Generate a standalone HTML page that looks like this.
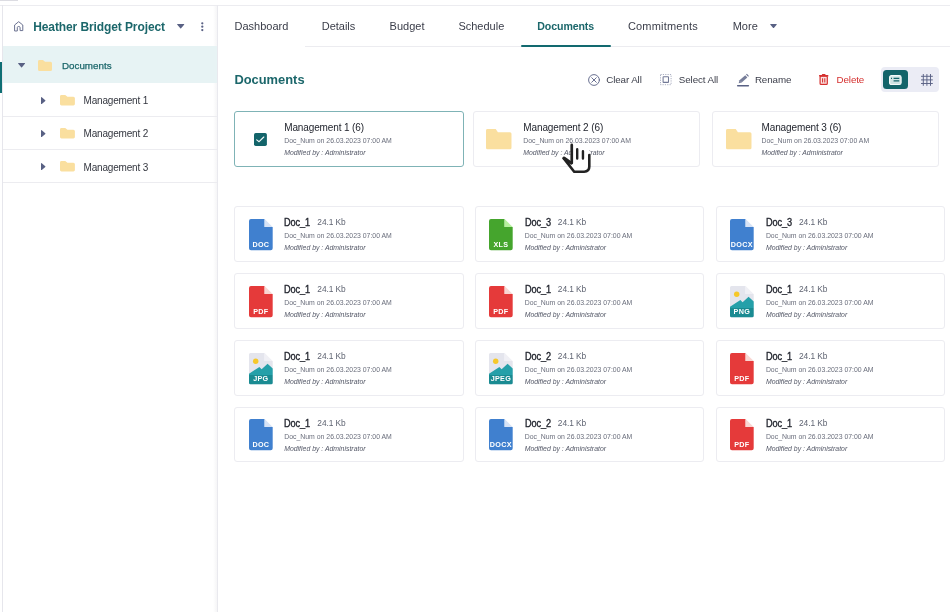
<!DOCTYPE html><html><head><meta charset="utf-8"><title>Documents</title><style>
*{margin:0;padding:0;box-sizing:border-box}
html,body{width:950px;height:612px;background:#fff;overflow:hidden}
body{position:relative;filter:blur(0.5px);font-family:"Liberation Sans",sans-serif;color:#2b2f3a}
.t{position:absolute;white-space:nowrap;line-height:1;font-size:11px}
.abs{position:absolute}
.card{position:absolute;background:#fff;border:1px solid #ececf1;border-radius:3px;height:55.5px}
.card.sel{border-color:#7fb3b6}
.c1{left:49px;top:10.7px;font-size:10px;letter-spacing:-0.12px;color:#23262f}
.c1 b{font-weight:normal;-webkit-text-stroke:0.35px #23262f;font-size:10.2px;display:inline-block;transform:scaleX(0.9);transform-origin:0 50%;margin-right:-3px}
.c1 .sz{position:relative;top:-0.7px;font-size:8.4px;letter-spacing:-0.1px;color:#5f6472;margin-left:7.3px;font-weight:normal}
.c2{left:49px;top:26.1px;font-size:6.9px;color:#6a6e7c}
.c3{left:49px;top:38.1px;font-size:6.9px;color:#555968;font-style:italic}
svg{position:absolute;overflow:visible}
</style></head><body>
<div class="abs" style="left:0;top:0;width:18px;height:1px;background:#dcdce2"></div>
<div class="abs" style="left:0;top:5px;width:950px;height:1px;background:#ececf0"></div>
<div class="abs" style="left:2px;top:5px;width:1px;height:607px;background:#e6e6ec"></div>
<div class="abs" style="left:217px;top:5px;width:1px;height:607px;background:#e9e9ee"></div>
<div class="abs" style="left:213px;top:6px;width:4px;height:606px;background:linear-gradient(90deg,rgba(30,30,60,0),rgba(30,30,60,0.045))"></div>
<svg style="left:13.8px;top:21.1px" width="9.4" height="10.2" viewBox="0 0 9.4 10.2" fill="none" stroke="#596184" stroke-width="1" stroke-linejoin="round" stroke-linecap="round" opacity="0.9"><path d="M0.6 9.6V4L4.7 0.7L8.8 4V9.6H6.1V6.6Q6.1 5.5 4.7 5.5Q3.3 5.5 3.3 6.6V9.6Z"/></svg>
<div class="t" id="proj" style="left:33.2px;top:20.8px;font-size:12px;letter-spacing:-0.1px;font-weight:bold;color:#1c676b">Heather Bridget Project</div>
<svg style="left:176.8px;top:23.9px" width="7.4" height="4.6" viewBox="0 0 7.4 4.6"><path d="M0.4 0H7Q7.6 0.3 7.1 0.8L4.1 4.3Q3.7 4.7 3.3 4.3L0.3 0.8Q-0.2 0.3 0.4 0Z" fill="#596184"/></svg>
<svg style="left:201px;top:21.6px" width="2.6" height="9.4" viewBox="0 0 2.6 9.4" fill="#596184"><circle cx="1.3" cy="1.3" r="1.15"/><circle cx="1.3" cy="4.7" r="1.15"/><circle cx="1.3" cy="8.1" r="1.15"/></svg>
<div class="abs" style="left:3px;top:46px;width:214px;height:37.2px;background:#e7f3f4"></div>
<div class="abs" style="left:0;top:62px;width:1.6px;height:31px;background:#0f6f74"></div>
<svg style="left:17.6px;top:63px" width="7.2" height="4.6" viewBox="0 0 7.4 4.6"><path d="M0.4 0H7Q7.6 0.3 7.1 0.8L4.1 4.3Q3.7 4.7 3.3 4.3L0.3 0.8Q-0.2 0.3 0.4 0Z" fill="#596184"/></svg>
<svg style="left:37.9px;top:59.9px" width="14" height="11.1" viewBox="0 0 14 11.1"><path d="M1.5 0H4.88L7.08 1.776H12.5Q14 1.776 14 3.276V9.6Q14 11.1 12.5 11.1H1.5Q0 11.1 0 9.6V1.5Q0 0 1.5 0Z" fill="#fadf9f"/></svg>
<div class="t" id="sdoc" style="left:62px;top:60.5px;font-size:9.8px;-webkit-text-stroke:0.25px #1c676b;color:#1c676b">Documents</div>
<div class="abs" style="left:3px;top:115.9px;width:214px;height:1px;background:#ececf0"></div>
<svg style="left:41.2px;top:96.7px" width="4.6" height="7.2" viewBox="0 0 4.6 7.2"><path d="M0 0.4V6.8Q0.3 7.4 0.8 6.9L4.3 3.95Q4.7 3.6 4.3 3.25L0.8 0.3Q0.3 -0.2 0 0.4Z" fill="#596184"/></svg>
<svg style="left:59.7px;top:94.8px" width="14.9" height="10.6" viewBox="0 0 14.9 10.6"><path d="M1.5 0H5.258L7.458 1.696H13.4Q14.9 1.696 14.9 3.1959999999999997V9.1Q14.9 10.6 13.4 10.6H1.5Q0 10.6 0 9.1V1.5Q0 0 1.5 0Z" fill="#fadf9f"/></svg>
<div class="t m" style="left:83.6px;top:96.0px;font-size:10px;letter-spacing:-0.19px;color:#33363f">Management 1</div>
<div class="abs" style="left:3px;top:149.3px;width:214px;height:1px;background:#ececf0"></div>
<svg style="left:41.2px;top:130.1px" width="4.6" height="7.2" viewBox="0 0 4.6 7.2"><path d="M0 0.4V6.8Q0.3 7.4 0.8 6.9L4.3 3.95Q4.7 3.6 4.3 3.25L0.8 0.3Q0.3 -0.2 0 0.4Z" fill="#596184"/></svg>
<svg style="left:59.7px;top:128.20000000000002px" width="14.9" height="10.6" viewBox="0 0 14.9 10.6"><path d="M1.5 0H5.258L7.458 1.696H13.4Q14.9 1.696 14.9 3.1959999999999997V9.1Q14.9 10.6 13.4 10.6H1.5Q0 10.6 0 9.1V1.5Q0 0 1.5 0Z" fill="#fadf9f"/></svg>
<div class="t m" style="left:83.6px;top:129.4px;font-size:10px;letter-spacing:-0.19px;color:#33363f">Management 2</div>
<div class="abs" style="left:3px;top:182.4px;width:214px;height:1px;background:#ececf0"></div>
<svg style="left:41.2px;top:163.2px" width="4.6" height="7.2" viewBox="0 0 4.6 7.2"><path d="M0 0.4V6.8Q0.3 7.4 0.8 6.9L4.3 3.95Q4.7 3.6 4.3 3.25L0.8 0.3Q0.3 -0.2 0 0.4Z" fill="#596184"/></svg>
<svg style="left:59.7px;top:161.3px" width="14.9" height="10.6" viewBox="0 0 14.9 10.6"><path d="M1.5 0H5.258L7.458 1.696H13.4Q14.9 1.696 14.9 3.1959999999999997V9.1Q14.9 10.6 13.4 10.6H1.5Q0 10.6 0 9.1V1.5Q0 0 1.5 0Z" fill="#fadf9f"/></svg>
<div class="t m" style="left:83.6px;top:162.5px;font-size:10px;letter-spacing:-0.19px;color:#33363f">Management 3</div>
<div class="t tab" style="left:234.5px;top:20.7px;font-size:11px;color:#3a3d49">Dashboard</div>
<div class="t tab" style="left:321.7px;top:20.7px;font-size:11px;color:#3a3d49">Details</div>
<div class="t tab" style="left:389.6px;top:20.7px;font-size:11px;color:#3a3d49">Budget</div>
<div class="t tab" style="left:458.4px;top:20.7px;font-size:11px;color:#3a3d49">Schedule</div>
<div class="t tab" style="left:537.3px;top:20.7px;font-size:11px;font-weight:bold;font-size:10.6px;letter-spacing:-0.1px;color:#1c676b">Documents</div>
<div class="t tab" style="left:627.9px;top:20.7px;font-size:11px;color:#3a3d49;letter-spacing:0.2px">Commitments</div>
<div class="t tab" style="left:732.7px;top:20.7px;font-size:11px;color:#3a3d49">More</div>
<svg style="left:770px;top:24px" width="7" height="4.2" viewBox="0 0 7.4 4.6"><path d="M0.4 0H7Q7.6 0.3 7.1 0.8L4.1 4.3Q3.7 4.7 3.3 4.3L0.3 0.8Q-0.2 0.3 0.4 0Z" fill="#596184"/></svg>
<div class="abs" style="left:305px;top:46px;width:645px;height:1px;background:#ececf0"></div>
<div class="abs" style="left:520.5px;top:44.6px;width:90.6px;height:2.2px;background:#12696f;border-radius:1px"></div>
<div class="t" id="hd" style="left:234.4px;top:74.2px;font-size:12.9px;font-weight:bold;color:#1c676b">Documents</div>
<svg style="left:587.9px;top:73.8px" width="12" height="12" viewBox="0 0 12 12" fill="none" stroke="#596184" stroke-width="0.9" stroke-linecap="round"><circle cx="6" cy="6" r="5.4"/><path d="M3.7 3.7L8.3 8.3M8.3 3.7L3.7 8.3"/></svg>
<div class="t tb" style="left:606.2px;top:74.6px;font-size:9.8px;letter-spacing:-0.1px;color:#3a3d49">Clear All</div>
<svg style="left:660.2px;top:73.8px" width="11.6" height="11.2" viewBox="0 0 11.6 11.2" fill="none" stroke="#596184"><rect x="0.5" y="0.5" width="10.6" height="10.2" stroke-width="1" stroke-dasharray="1.2 1.15" opacity="0.5"/><rect x="3.1" y="2.8" width="5.4" height="5.6" rx="0.5" stroke-width="1.05" opacity="0.85"/></svg>
<div class="t tb" style="left:678.8px;top:74.6px;font-size:9.8px;letter-spacing:-0.1px;color:#3a3d49">Select All</div>
<svg style="left:736.5px;top:73.5px" width="12" height="12.8" viewBox="0 0 12 12.8"><path d="M1.7 9.3L2.5 6.3L8.3 1.3L10.3 3.5L4.7 8.5Z" fill="#596184" opacity="0.82"/><path d="M9 0.5L9.9 -0.2L11.9 1.9L11.2 2.8Z" fill="#596184" opacity="0.9"/><path d="M3.4 6.9L4.2 7.7" stroke="#fff" stroke-width="0.5" opacity="0.6"/><path d="M0.7 11.7H11.4" stroke="#596184" stroke-width="1.5" stroke-linecap="round"/></svg>
<div class="t tb" style="left:754.9px;top:74.6px;font-size:9.8px;letter-spacing:-0.1px;color:#3a3d49">Rename</div>
<svg style="left:819.2px;top:73.8px" width="9.4" height="11" viewBox="0 0 9.4 11"><rect x="1.1" y="2.2" width="7.2" height="8.2" rx="0.9" fill="#fbe3e2" stroke="#d5302f" stroke-width="1.2"/><rect x="0" y="0.9" width="9.4" height="1.6" rx="0.5" fill="#d5302f"/><rect x="2.9" y="0" width="3.6" height="1.4" rx="0.4" fill="#d5302f"/><path d="M3.6 4.3V8.6M5.8 4.3V8.6" stroke="#d5302f" stroke-width="1.05"/></svg>
<div class="t tb" style="left:836.5px;top:74.6px;font-size:9.8px;letter-spacing:-0.1px;color:#d5302f">Delete</div>
<div class="abs" style="left:880.9px;top:67.2px;width:58.2px;height:24.8px;background:#ebecf5;border-radius:4px"></div>
<div class="abs" style="left:883.2px;top:69.9px;width:25.1px;height:19.6px;background:#13646a;border-radius:3.5px"></div>
<svg style="left:889.1px;top:74.6px" width="12.7" height="10.1" viewBox="0 0 12.7 10.1"><rect x="0.6" y="0.6" width="11.5" height="8.9" rx="1.8" fill="#cfe3e4" stroke="#f4fafa" stroke-width="1.2"/><path d="M2 3.4H3M4.6 3.4H10.3M4.6 5.9H10.3" stroke="#13646a" stroke-width="1.1" fill="none"/></svg>
<svg style="left:920.5px;top:73.5px" width="11.8" height="11.8" viewBox="0 0 11.8 11.8" fill="none" stroke="#596184" stroke-width="0.95"><path d="M2.3 0V11.8M5.9 0V11.8M9.5 0V11.8M0 2.3H11.8M0 5.9H11.8M0 9.5H11.8"/></svg>
<div class="card sel" style="left:234.2px;top:111.4px;width:229.8px">
<svg style="left:19.1px;top:21.1px" width="12.9" height="12.9" viewBox="0 0 12.9 12.9"><rect width="12.9" height="12.9" rx="1.7" fill="#13646a"/><path d="M2.7 6.9L5.1 8.7L9.8 4" fill="none" stroke="#f2f8f8" stroke-width="1.15" stroke-linecap="round" stroke-linejoin="round"/></svg>
<div class="t c1 ft">Management 1 (6)</div>
<div class="t c2">Doc_Num on 26.03.2023 07:00 AM</div>
<div class="t c3">Modified by : Administrator</div>
</div>
<div class="card" style="left:473.3px;top:111.4px;width:226.9px">
<svg style="left:11.6px;top:17.1px" width="25.5" height="20.2" viewBox="0 0 25.5 20.2"><path d="M1.5 0H9.709999999999999L11.909999999999998 3.2319999999999998H24.0Q25.5 3.2319999999999998 25.5 4.731999999999999V18.7Q25.5 20.2 24.0 20.2H1.5Q0 20.2 0 18.7V1.5Q0 0 1.5 0Z" fill="#fadf9f"/></svg>
<div class="t c1 ft">Management 2 (6)</div>
<div class="t c2">Doc_Num on 26.03.2023 07:00 AM</div>
<div class="t c3">Modified by : Administrator</div>
</div>
<div class="card" style="left:711.5px;top:111.4px;width:227.6px">
<svg style="left:13.2px;top:17.1px" width="25.5" height="20.2" viewBox="0 0 25.5 20.2"><path d="M1.5 0H9.709999999999999L11.909999999999998 3.2319999999999998H24.0Q25.5 3.2319999999999998 25.5 4.731999999999999V18.7Q25.5 20.2 24.0 20.2H1.5Q0 20.2 0 18.7V1.5Q0 0 1.5 0Z" fill="#fadf9f"/></svg>
<div class="t c1 ft">Management 3 (6)</div>
<div class="t c2">Doc_Num on 26.03.2023 07:00 AM</div>
<div class="t c3">Modified by : Administrator</div>
</div>
<div class="card" style="left:234.2px;top:206.3px;width:229.8px">
<svg style="left:13.6px;top:11.5px" width="23.7" height="31.2" viewBox="0 0 23.7 31.2"><path d="M2 0H15.6V8.0H23.7V29.2Q23.7 31.2 21.7 31.2H2Q0 31.2 0 29.2V2Q0 0 2 0Z" fill="#4080cf"/><path d="M15.6 0L23.7 8.0H15.6Z" fill="#d7e3f6"/><text x="11.85" y="27.8" text-anchor="middle" font-family="Liberation Sans" font-weight="bold" font-size="7.2" letter-spacing="0.3" fill="#fff">DOC</text></svg>
<div class="t c1 dt"><b>Doc_1</b><span class="sz">24.1 Kb</span></div>
<div class="t c2">Doc_Num on 26.03.2023 07:00 AM</div>
<div class="t c3">Modified by : Administrator</div>
</div>
<div class="card" style="left:474.7px;top:206.3px;width:229.1px">
<svg style="left:13.6px;top:11.5px" width="23.7" height="31.2" viewBox="0 0 23.7 31.2"><path d="M2 0H15.6V8.0H23.7V29.2Q23.7 31.2 21.7 31.2H2Q0 31.2 0 29.2V2Q0 0 2 0Z" fill="#45a52d"/><path d="M15.6 0L23.7 8.0H15.6Z" fill="#b6f09d"/><text x="11.85" y="27.8" text-anchor="middle" font-family="Liberation Sans" font-weight="bold" font-size="7.2" letter-spacing="0.3" fill="#fff">XLS</text></svg>
<div class="t c1 dt"><b>Doc_3</b><span class="sz">24.1 Kb</span></div>
<div class="t c2">Doc_Num on 26.03.2023 07:00 AM</div>
<div class="t c3">Modified by : Administrator</div>
</div>
<div class="card" style="left:715.9px;top:206.3px;width:229.4px">
<svg style="left:13.6px;top:11.5px" width="23.7" height="31.2" viewBox="0 0 23.7 31.2"><path d="M2 0H15.6V8.0H23.7V29.2Q23.7 31.2 21.7 31.2H2Q0 31.2 0 29.2V2Q0 0 2 0Z" fill="#4080cf"/><path d="M15.6 0L23.7 8.0H15.6Z" fill="#d7e3f6"/><text x="11.85" y="27.8" text-anchor="middle" font-family="Liberation Sans" font-weight="bold" font-size="7.2" letter-spacing="0.3" fill="#fff">DOCX</text></svg>
<div class="t c1 dt"><b>Doc_3</b><span class="sz">24.1 Kb</span></div>
<div class="t c2">Doc_Num on 26.03.2023 07:00 AM</div>
<div class="t c3">Modified by : Administrator</div>
</div>
<div class="card" style="left:234.2px;top:273.1px;width:229.8px">
<svg style="left:13.6px;top:11.5px" width="23.7" height="31.2" viewBox="0 0 23.7 31.2"><path d="M2 0H15.6V8.0H23.7V29.2Q23.7 31.2 21.7 31.2H2Q0 31.2 0 29.2V2Q0 0 2 0Z" fill="#e53a3a"/><path d="M15.6 0L23.7 8.0H15.6Z" fill="#f9d6d2"/><text x="11.85" y="27.8" text-anchor="middle" font-family="Liberation Sans" font-weight="bold" font-size="7.2" letter-spacing="0.3" fill="#fff">PDF</text></svg>
<div class="t c1 dt"><b>Doc_1</b><span class="sz">24.1 Kb</span></div>
<div class="t c2">Doc_Num on 26.03.2023 07:00 AM</div>
<div class="t c3">Modified by : Administrator</div>
</div>
<div class="card" style="left:474.7px;top:273.1px;width:229.1px">
<svg style="left:13.6px;top:11.5px" width="23.7" height="31.2" viewBox="0 0 23.7 31.2"><path d="M2 0H15.6V8.0H23.7V29.2Q23.7 31.2 21.7 31.2H2Q0 31.2 0 29.2V2Q0 0 2 0Z" fill="#e53a3a"/><path d="M15.6 0L23.7 8.0H15.6Z" fill="#f9d6d2"/><text x="11.85" y="27.8" text-anchor="middle" font-family="Liberation Sans" font-weight="bold" font-size="7.2" letter-spacing="0.3" fill="#fff">PDF</text></svg>
<div class="t c1 dt"><b>Doc_1</b><span class="sz">24.1 Kb</span></div>
<div class="t c2">Doc_Num on 26.03.2023 07:00 AM</div>
<div class="t c3">Modified by : Administrator</div>
</div>
<div class="card" style="left:715.9px;top:273.1px;width:229.4px">
<svg style="left:13.6px;top:11.5px" width="23.7" height="31.2" viewBox="0 0 23.7 31.2"><path d="M1.5 0H15.6V8.0H23.7V29.7Q23.7 31.2 22.2 31.2H1.5Q0 31.2 0 29.7V1.5Q0 0 1.5 0Z" fill="#e4e5ed"/><path d="M15.6 0L23.7 8.0H15.6Z" fill="#f0f0f5"/><circle cx="6.7" cy="8.2" r="2.7" fill="#f6c829"/><path d="M0 20.8L10.4 13.9L12.6 16.3L18.6 10.8L23.7 15.5V22H0Z" fill="#25a0a9"/><path d="M0 21.9H23.7V29.7Q23.7 31.2 22.2 31.2H1.5Q0 31.2 0 29.7Z" fill="#1a8b92"/><text x="11.85" y="28.3" text-anchor="middle" font-family="Liberation Sans" font-weight="bold" font-size="7.2" letter-spacing="0.3" fill="#fff">PNG</text></svg>
<div class="t c1 dt"><b>Doc_1</b><span class="sz">24.1 Kb</span></div>
<div class="t c2">Doc_Num on 26.03.2023 07:00 AM</div>
<div class="t c3">Modified by : Administrator</div>
</div>
<div class="card" style="left:234.2px;top:340.1px;width:229.8px">
<svg style="left:13.6px;top:11.5px" width="23.7" height="31.2" viewBox="0 0 23.7 31.2"><path d="M1.5 0H15.6V8.0H23.7V29.7Q23.7 31.2 22.2 31.2H1.5Q0 31.2 0 29.7V1.5Q0 0 1.5 0Z" fill="#e4e5ed"/><path d="M15.6 0L23.7 8.0H15.6Z" fill="#f0f0f5"/><circle cx="6.7" cy="8.2" r="2.7" fill="#f6c829"/><path d="M0 20.8L10.4 13.9L12.6 16.3L18.6 10.8L23.7 15.5V22H0Z" fill="#25a0a9"/><path d="M0 21.9H23.7V29.7Q23.7 31.2 22.2 31.2H1.5Q0 31.2 0 29.7Z" fill="#1a8b92"/><text x="11.85" y="28.3" text-anchor="middle" font-family="Liberation Sans" font-weight="bold" font-size="7.2" letter-spacing="0.3" fill="#fff">JPG</text></svg>
<div class="t c1 dt"><b>Doc_1</b><span class="sz">24.1 Kb</span></div>
<div class="t c2">Doc_Num on 26.03.2023 07:00 AM</div>
<div class="t c3">Modified by : Administrator</div>
</div>
<div class="card" style="left:474.7px;top:340.1px;width:229.1px">
<svg style="left:13.6px;top:11.5px" width="23.7" height="31.2" viewBox="0 0 23.7 31.2"><path d="M1.5 0H15.6V8.0H23.7V29.7Q23.7 31.2 22.2 31.2H1.5Q0 31.2 0 29.7V1.5Q0 0 1.5 0Z" fill="#e4e5ed"/><path d="M15.6 0L23.7 8.0H15.6Z" fill="#f0f0f5"/><circle cx="6.7" cy="8.2" r="2.7" fill="#f6c829"/><path d="M0 20.8L10.4 13.9L12.6 16.3L18.6 10.8L23.7 15.5V22H0Z" fill="#25a0a9"/><path d="M0 21.9H23.7V29.7Q23.7 31.2 22.2 31.2H1.5Q0 31.2 0 29.7Z" fill="#1a8b92"/><text x="11.85" y="28.3" text-anchor="middle" font-family="Liberation Sans" font-weight="bold" font-size="7.2" letter-spacing="0.3" fill="#fff">JPEG</text></svg>
<div class="t c1 dt"><b>Doc_2</b><span class="sz">24.1 Kb</span></div>
<div class="t c2">Doc_Num on 26.03.2023 07:00 AM</div>
<div class="t c3">Modified by : Administrator</div>
</div>
<div class="card" style="left:715.9px;top:340.1px;width:229.4px">
<svg style="left:13.6px;top:11.5px" width="23.7" height="31.2" viewBox="0 0 23.7 31.2"><path d="M2 0H15.6V8.0H23.7V29.2Q23.7 31.2 21.7 31.2H2Q0 31.2 0 29.2V2Q0 0 2 0Z" fill="#e53a3a"/><path d="M15.6 0L23.7 8.0H15.6Z" fill="#f9d6d2"/><text x="11.85" y="27.8" text-anchor="middle" font-family="Liberation Sans" font-weight="bold" font-size="7.2" letter-spacing="0.3" fill="#fff">PDF</text></svg>
<div class="t c1 dt"><b>Doc_1</b><span class="sz">24.1 Kb</span></div>
<div class="t c2">Doc_Num on 26.03.2023 07:00 AM</div>
<div class="t c3">Modified by : Administrator</div>
</div>
<div class="card" style="left:234.2px;top:406.9px;width:229.8px">
<svg style="left:13.6px;top:11.5px" width="23.7" height="31.2" viewBox="0 0 23.7 31.2"><path d="M2 0H15.6V8.0H23.7V29.2Q23.7 31.2 21.7 31.2H2Q0 31.2 0 29.2V2Q0 0 2 0Z" fill="#4080cf"/><path d="M15.6 0L23.7 8.0H15.6Z" fill="#d7e3f6"/><text x="11.85" y="27.8" text-anchor="middle" font-family="Liberation Sans" font-weight="bold" font-size="7.2" letter-spacing="0.3" fill="#fff">DOC</text></svg>
<div class="t c1 dt"><b>Doc_1</b><span class="sz">24.1 Kb</span></div>
<div class="t c2">Doc_Num on 26.03.2023 07:00 AM</div>
<div class="t c3">Modified by : Administrator</div>
</div>
<div class="card" style="left:474.7px;top:406.9px;width:229.1px">
<svg style="left:13.6px;top:11.5px" width="23.7" height="31.2" viewBox="0 0 23.7 31.2"><path d="M2 0H15.6V8.0H23.7V29.2Q23.7 31.2 21.7 31.2H2Q0 31.2 0 29.2V2Q0 0 2 0Z" fill="#4080cf"/><path d="M15.6 0L23.7 8.0H15.6Z" fill="#d7e3f6"/><text x="11.85" y="27.8" text-anchor="middle" font-family="Liberation Sans" font-weight="bold" font-size="7.2" letter-spacing="0.3" fill="#fff">DOCX</text></svg>
<div class="t c1 dt"><b>Doc_2</b><span class="sz">24.1 Kb</span></div>
<div class="t c2">Doc_Num on 26.03.2023 07:00 AM</div>
<div class="t c3">Modified by : Administrator</div>
</div>
<div class="card" style="left:715.9px;top:406.9px;width:229.4px">
<svg style="left:13.6px;top:11.5px" width="23.7" height="31.2" viewBox="0 0 23.7 31.2"><path d="M2 0H15.6V8.0H23.7V29.2Q23.7 31.2 21.7 31.2H2Q0 31.2 0 29.2V2Q0 0 2 0Z" fill="#e53a3a"/><path d="M15.6 0L23.7 8.0H15.6Z" fill="#f9d6d2"/><text x="11.85" y="27.8" text-anchor="middle" font-family="Liberation Sans" font-weight="bold" font-size="7.2" letter-spacing="0.3" fill="#fff">PDF</text></svg>
<div class="t c1 dt"><b>Doc_1</b><span class="sz">24.1 Kb</span></div>
<div class="t c2">Doc_Num on 26.03.2023 07:00 AM</div>
<div class="t c3">Modified by : Administrator</div>
</div>
<svg style="left:560px;top:140px" width="32" height="34" viewBox="560 140 32 34"><path d="M570.6 144.5H572.9V148.2L577.2 148.5L583 149.4L590 151V167Q589.3 171.7 584.5 171.7H573.8L563.4 158.4L571 162.8Z" fill="#fff"/><path d="M571.75 144.9V163" stroke="#222" stroke-width="2.7" stroke-linecap="round" fill="none"/><path d="M577.2 149.3V158.6M582.95 151.3V158.6" stroke="#222" stroke-width="2.4" stroke-linecap="round" fill="none"/><path d="M589.3 155V166.6Q589.3 171.7 584.2 171.7H574.2L563.8 158.4" stroke="#222" stroke-width="2.6" stroke-linecap="round" stroke-linejoin="round" fill="none"/><path d="M564 158.2L571 163" stroke="#222" stroke-width="3.3" stroke-linecap="round" fill="none"/></svg>
</body></html>
